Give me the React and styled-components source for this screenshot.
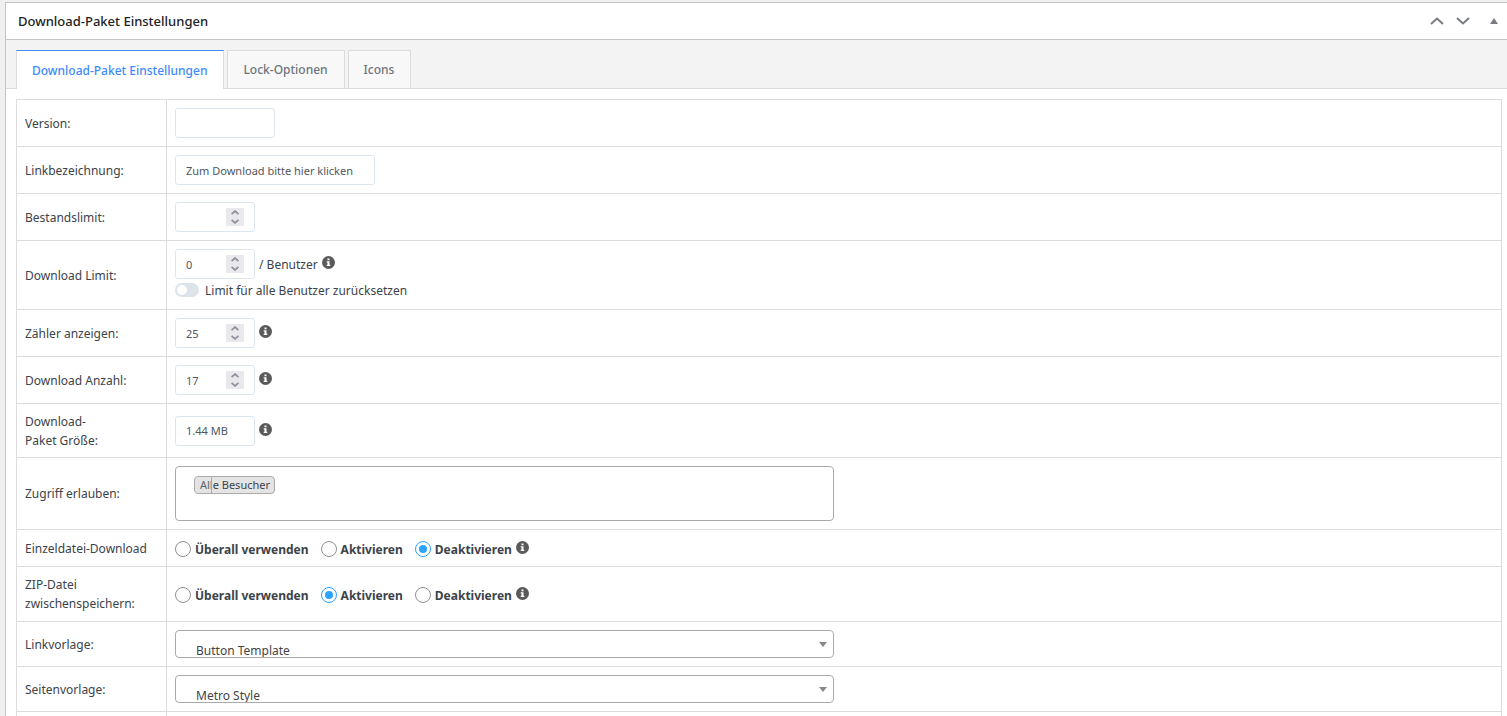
import React, { useState } from "react";
import styled, { createGlobalStyle, css } from "styled-components";

const GlobalStyle = createGlobalStyle`
  * {
    box-sizing: border-box;
  }

  body {
    margin: 0;
    background: #f0f0f1;
    color: #3c434a;
    font-family: "Noto Sans", "Open Sans", sans-serif;
    font-size: 12px;
    line-height: 19px;
  }

  input, select, button {
    margin: 0;
    font-family: inherit;
  }
`;

const Page = styled.div`
  height: 100vh;
  overflow: hidden;
  padding: 2px 0 0 5px;
`;

const MetaBox = styled.section`
  background: #fff;
  border: 1px solid #c3c4c7;
  border-right: 0;
`;

const BoxHeader = styled.header`
  display: flex;
  align-items: center;
  justify-content: space-between;
  height: 37px;
  padding-left: 12px;
  border-bottom: 1px solid #c3c4c7;
`;

const BoxTitle = styled.h2`
  margin: 0;
  color: #1d2327;
  font-size: 13px;
  font-weight: 500;
`;

const HandleActions = styled.div`
  display: flex;
  align-items: center;
  gap: 5px;
`;

const HandleButton = styled.button`
  display: flex;
  align-items: center;
  justify-content: center;
  width: 26px;
  height: 26px;
  padding: 0;
  border: 0;
  background: none;
  color: #787c82;
`;

const OrderButtons = styled.div`
  display: flex;
`;

const TabBar = styled.nav`
  display: flex;
  gap: 3px;
  height: 49px;
  padding: 10px 10px 0;
  background: #f3f3f3;
  border-bottom: 1px solid #dcdcde;
`;

const Tab = styled.button`
  height: 38px;
  padding: 0 16px 0 15px;
  border: 1px solid #dcdcde;
  border-bottom: 0;
  background: #f8f8f8;
  color: #6c757d;
  font-size: 12px;
  font-weight: 500;

  ${(props) => props.$active && css`
    height: 39px;
    border-top-color: #3d8bfd;
    background: #fff;
    color: #3d8bfd;
  `}
`;

const TabPanel = styled.div`
  padding: 10px 5px 10px 10px;
`;

const SettingsTable = styled.table`
  width: 100%;
  border-collapse: collapse;
  table-layout: fixed;
`;

const Row = styled.tr`
  height: ${(props) => props.$height || 47}px;
`;

const LabelCell = styled.th`
  width: 150px;
  padding: 0 8px;
  border: 1px solid #dcdcde;
  font-weight: 400;
  text-align: left;
`;

const FieldCell = styled.td`
  padding: 0 8px;
  border: 1px solid #dcdcde;
`;

const Line = styled.div`
  display: flex;
  align-items: center;
  gap: 4px;
`;

const fieldFrame = css`
  height: 30px;
  border: 1px solid #dce6f0;
  border-radius: 3px;
  background: #fff;
`;

const TextInput = styled.input`
  ${fieldFrame}
  width: ${(props) => props.$width}px;
  padding: 0 10px;
  color: #50575e;
  font-size: 11px;
`;

const NumberFrame = styled.span`
  ${fieldFrame}
  display: flex;
  align-items: center;
  width: 80px;
  padding: 0 10px;
`;

const NumberInput = styled.input`
  flex: 1;
  min-width: 0;
  padding: 0;
  border: 0;
  outline: 0;
  background: none;
  color: #50575e;
  font-size: 11px;
  appearance: textfield;

  &::-webkit-inner-spin-button {
    appearance: none;
  }
`;

const Stepper = styled.span`
  display: flex;
  flex-direction: column;
  background: #e9e9ed;
`;

const StepButton = styled.button`
  display: flex;
  align-items: center;
  justify-content: center;
  width: 18px;
  height: 9px;
  padding: 0;
  border: 0;
  background: none;
  color: #8f8f9d;
`;

const InfoButton = styled.button`
  display: flex;
  align-self: flex-start;
  margin-top: ${(props) => props.$top || 0}px;
  padding: 0;
  border: 0;
  background: none;
`;

const SwitchLabel = styled.label`
  display: flex;
  align-items: center;
  gap: 6px;
  height: 22px;
`;

const Switch = styled.input`
  display: flex;
  align-items: center;
  appearance: none;
  width: 24px;
  height: 14px;
  padding: 0 2px;
  border-radius: 7px;
  background: #dce3ea;

  &::before {
    content: "";
    width: 10px;
    height: 10px;
    border-radius: 50%;
    background: #fff;
  }

  &:checked {
    justify-content: flex-end;
    background: #3d8bfd;
  }
`;

const TagBox = styled.div`
  width: 659px;
  max-width: 100%;
  height: 55px;
  padding: 9px 18px;
  border: 1px solid #aaa;
  border-radius: 4px;
`;

const Tag = styled.span`
  position: relative;
  display: inline-flex;
  align-items: center;
  height: 18px;
  padding: 0 4px 0 5px;
  border: 1px solid #aaa;
  border-radius: 4px;
  background: #e4e4e4;
  font-size: 11px;
  line-height: 16px;
  vertical-align: top;
`;

const TagRemove = styled.button`
  position: absolute;
  inset: 0 auto 0 0;
  width: 17px;
  padding: 0;
  border: 0;
  border-right: 1px solid #aaa;
  background: rgba(228, 228, 228, 0.2);
`;

const ModeLine = styled(Line)`
  padding-top: 2px;
`;

const RadioGroup = styled.div`
  display: flex;
  align-items: center;
  gap: 12px;
`;

const RadioLabel = styled.label`
  display: flex;
  align-items: center;
  gap: 4px;
  font-weight: 700;
`;

const Radio = styled.input`
  display: grid;
  place-items: center;
  appearance: none;
  width: 16px;
  height: 16px;
  border: 1px solid #8c8f94;
  border-radius: 50%;
  background: #fff;

  &:checked {
    border-color: #2ea2ff;
  }

  &:checked::before {
    content: "";
    width: 8px;
    height: 8px;
    border-radius: 50%;
    background: #2ea2ff;
  }
`;

const SelectWrap = styled.div`
  position: relative;
  width: 659px;
  max-width: 100%;

  &::after {
    content: "";
    position: absolute;
    top: 12px;
    right: 7px;
    border: 4px solid transparent;
    border-top: 5px solid #888;
    border-bottom: 0;
    pointer-events: none;
  }
`;

const Select = styled.select`
  display: block;
  appearance: none;
  width: 100%;
  height: 28px;
  padding: 11px 20px 0;
  border: 1px solid #aaa;
  border-radius: 4px;
  background: #fff;
  color: #444;
  font-size: 12px;
`;

const Chevron = ({ up, size = 14, stroke = 2 }) => (
  <svg width={size} height={size / 2 + 1} viewBox="0 0 14 8" fill="none" stroke="currentColor" strokeWidth={stroke} aria-hidden="true">
    <path d={up ? "M1 7 7 1.5 13 7" : "M1 1l6 5.5L13 1"} />
  </svg>
);

const Info = ({ top }) => (
  <InfoButton type="button" aria-label="Info" $top={top}>
    <svg width="13" height="13" viewBox="0 0 13 13" aria-hidden="true">
      <circle cx="6.5" cy="6.5" r="6.5" fill="#5a5a5a" />
      <path fill="#fff" d="M5.5 2.5h2v1.7h-2zM4.7 5.2h2.8v3.6h.8V10H4.7V8.8h.8V6.4h-.8z" />
    </svg>
  </InfoButton>
);

const NumberField = ({ id, initial }) => {
  const [value, setValue] = useState(initial);
  const step = (diff) => setValue(String(Math.max(0, Number(value) + diff)));

  return (
    <NumberFrame>
      <NumberInput id={id} type="number" min="0" value={value} onChange={(e) => setValue(e.target.value)} />
      <Stepper>
        <StepButton type="button" tabIndex={-1} aria-label="Erhöhen" onClick={() => step(1)}>
          <Chevron up size={8} stroke={3} />
        </StepButton>
        <StepButton type="button" tabIndex={-1} aria-label="Verringern" onClick={() => step(-1)}>
          <Chevron size={8} stroke={3} />
        </StepButton>
      </Stepper>
    </NumberFrame>
  );
};

const modes = ["Überall verwenden", "Aktivieren", "Deaktivieren"];

const ModeField = ({ name, initial }) => {
  const [mode, setMode] = useState(initial);

  return (
    <ModeLine>
      <RadioGroup role="radiogroup" aria-labelledby={`${name}-label`}>
        {modes.map((item) => (
          <RadioLabel key={item}>
            <Radio type="radio" name={name} checked={mode === item} onChange={() => setMode(item)} />
            {item}
          </RadioLabel>
        ))}
      </RadioGroup>
      <Info top={1} />
    </ModeLine>
  );
};

const SelectField = ({ id, options }) => (
  <SelectWrap>
    <Select id={id}>
      {options.map((option) => <option key={option}>{option}</option>)}
    </Select>
  </SelectWrap>
);

const Setting = ({ id, label, height, children }) => (
  <Row $height={height}>
    <LabelCell scope="row">
      <label id={`${id}-label`} htmlFor={id}>{label}</label>
    </LabelCell>
    <FieldCell>{children}</FieldCell>
  </Row>
);

const tabs = ["Download-Paket Einstellungen", "Lock-Optionen", "Icons"];

const App = () => {
  const [activeTab, setActiveTab] = useState(tabs[0]);

  return (
    <Page>
      <GlobalStyle />
      <MetaBox>
        <BoxHeader>
          <BoxTitle>Download-Paket Einstellungen</BoxTitle>
          <HandleActions>
            <OrderButtons>
              <HandleButton type="button" aria-label="Nach oben"><Chevron up /></HandleButton>
              <HandleButton type="button" aria-label="Nach unten"><Chevron /></HandleButton>
            </OrderButtons>
            <HandleButton type="button" aria-label="Einklappen">
              <svg width="8" height="6" viewBox="0 0 8 6" fill="currentColor" aria-hidden="true">
                <path d="M4 0 8 6H0z" />
              </svg>
            </HandleButton>
          </HandleActions>
        </BoxHeader>

        <TabBar>
          {tabs.map((tab) => (
            <Tab key={tab} type="button" $active={tab === activeTab} onClick={() => setActiveTab(tab)}>
              {tab}
            </Tab>
          ))}
        </TabBar>

        <TabPanel>
          <SettingsTable>
            <tbody>
              <Setting id="version" label="Version:">
                <Line><TextInput id="version" type="text" $width={100} /></Line>
              </Setting>
              <Setting id="link-label" label="Linkbezeichnung:">
                <Line>
                  <TextInput id="link-label" type="text" $width={200} defaultValue="Zum Download bitte hier klicken" />
                </Line>
              </Setting>
              <Setting id="quota" label="Bestandslimit:">
                <Line><NumberField id="quota" initial="" /></Line>
              </Setting>
              <Setting id="limit" label="Download Limit:" height={69}>
                <Line>
                  <NumberField id="limit" initial="0" />
                  <span>/ Benutzer</span>
                  <Info top={7} />
                </Line>
                <SwitchLabel>
                  <Switch type="checkbox" role="switch" />
                  Limit für alle Benutzer zurücksetzen
                </SwitchLabel>
              </Setting>
              <Setting id="views" label="Zähler anzeigen:">
                <Line><NumberField id="views" initial="25" /><Info top={7} /></Line>
              </Setting>
              <Setting id="downloads" label="Download Anzahl:">
                <Line><NumberField id="downloads" initial="17" /><Info top={7} /></Line>
              </Setting>
              <Setting id="size" label={<>Download-<br />Paket Größe:</>} height={54}>
                <Line><TextInput id="size" type="text" $width={80} defaultValue="1.44 MB" /><Info top={7} /></Line>
              </Setting>
              <Setting id="access" label="Zugriff erlauben:" height={72}>
                <TagBox>
                  <Tag>
                    Alle Besucher
                    <TagRemove id="access" type="button" aria-label="Alle Besucher entfernen" />
                  </Tag>
                </TagBox>
              </Setting>
              <Setting id="single-file" label="Einzeldatei-Download" height={37}>
                <ModeField name="single-file" initial="Deaktivieren" />
              </Setting>
              <Setting id="zip-cache" label={<>ZIP-Datei<br />zwischenspeichern:</>} height={55}>
                <ModeField name="zip-cache" initial="Aktivieren" />
              </Setting>
              <Setting id="link-template" label="Linkvorlage:" height={45}>
                <SelectField id="link-template" options={["Button Template"]} />
              </Setting>
              <Setting id="page-template" label="Seitenvorlage:" height={45}>
                <SelectField id="page-template" options={["Metro Style"]} />
              </Setting>
              <Row>
                <LabelCell />
                <FieldCell />
              </Row>
            </tbody>
          </SettingsTable>
        </TabPanel>
      </MetaBox>
    </Page>
  );
};

export default App;
